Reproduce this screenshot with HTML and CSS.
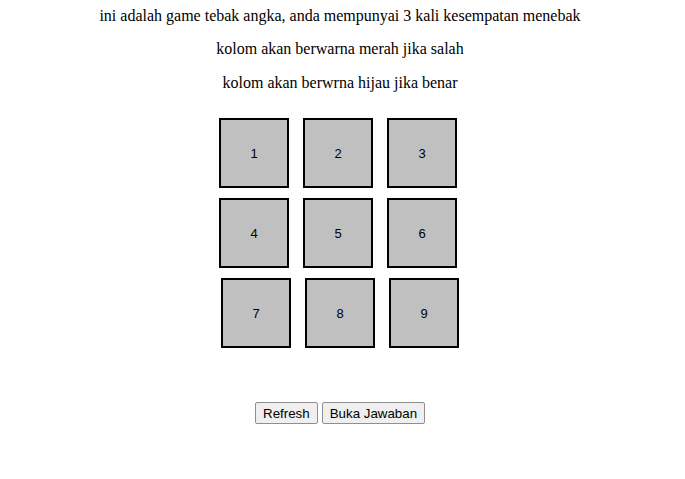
FILE: index.html
```html
<!DOCTYPE html>
<html>
<head>
<meta charset="utf-8">
<link rel="stylesheet" href="styles.css">
</head>
<body>
<div class="intro">
  <p>ini adalah game tebak angka, anda mempunyai 3 kali kesempatan menebak</p>
  <p>kolom akan berwarna merah jika salah</p>
  <p>kolom akan berwrna hijau jika benar</p>
</div>
<div class="board">
  <div class="row">
    <div class="cell">1</div><div class="cell">2</div><div class="cell">3</div>
  </div>
  <div class="row">
    <div class="cell">4</div><div class="cell">5</div><div class="cell">6</div>
  </div>
  <div class="row row-shift">
    <div class="cell">7</div><div class="cell">8</div><div class="cell">9</div>
  </div>
</div>
<div class="actions">
  <button class="btn">Refresh</button>
  <button class="btn">Buka Jawaban</button>
</div>
</body>
</html>
```
FILE: styles.css
```css
html, body {
  margin: 0;
  padding: 0;
  background: #fff;
}
body {
  font-family: "Liberation Serif", serif;
  font-size: 16px;
  color: #000;
}
.intro {
  padding-top: 7px;
  text-align: center;
  margin-left: -5px;
}
.intro p {
  margin: 0 0 15px 0;
  line-height: 18.4px;
}
.board {
  margin: 26px 0 0 219px;
  display: flex;
  flex-direction: column;
  gap: 10px;
}
.row {
  display: flex;
  gap: 14px;
}
.row-shift {
  padding-left: 2px;
}
.cell {
  width: 66px;
  height: 66px;
  border: 2px solid #000;
  background: #c0c0c0;
  display: flex;
  align-items: center;
  justify-content: center;
  font-family: "Liberation Sans", Arial, sans-serif;
  font-size: 13px;
  color: #000;
}
.actions {
  margin-top: 54px;
  display: flex;
  gap: 4px;
  margin-left: 255px;
}
.btn {
  font-family: "Liberation Sans", Arial, sans-serif;
  font-size: 13.333px;
  height: 22px;
  padding: 1px 7px;
  background: #efefef;
  border: 1px solid #8f8f8f;
  border-radius: 2px;
  color: #000;
}
```
